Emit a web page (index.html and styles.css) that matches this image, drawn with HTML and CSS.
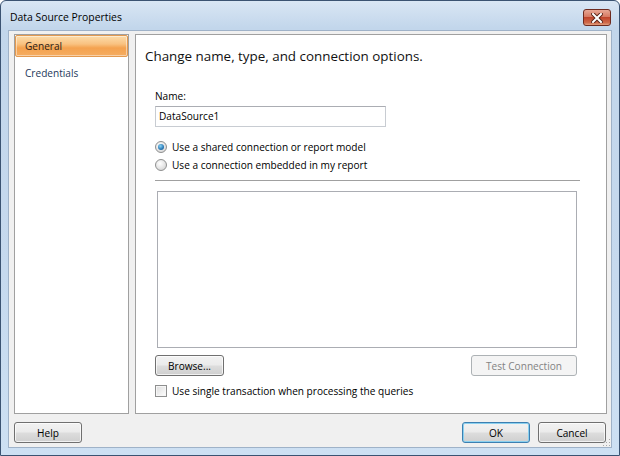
FILE: index.html
```html
<!DOCTYPE html>
<html>
	<head>
		<title>Data Source Properties</title>
		<link rel="stylesheet" href="styles.css">
	</head>
	<body>
		<div class="window">
			<div class="titlebar">
				<span class="title">Data Source Properties</span>
				<div class="close">
					<svg width="12" height="10" viewBox="0 0 12 10">
						<path d="M2 1 L10 9 M10 1 L2 9" stroke="#5a2418" stroke-width="4" stroke-linecap="square"/>
						<path d="M2 1 L10 9 M10 1 L2 9" stroke="#fff" stroke-width="2" stroke-linecap="square"/>
					</svg>
				</div>
			</div>
			<div class="client">
				<div class="main">
					<ul class="nav">
						<li class="active">General</li>
						<li>Credentials</li>
					</ul>
					<div class="page">
						<h1>Change name, type, and connection options.</h1>
						<div class="form">
							<div class="label">Name:</div>
							<div class="textbox">DataSource1</div>
							<div class="option first"><span class="radio on"></span>Use a shared connection or report model</div>
							<div class="option"><span class="radio"></span>Use a connection embedded in my report</div>
							<div class="rule"></div>
							<div class="area"></div>
							<div class="row">
								<button class="btn browse">Browse...</button>
								<button class="btn test" disabled>Test Connection</button>
							</div>
							<div class="option check-row"><span class="check"></span>Use single transaction when processing the queries</div>
						</div>
					</div>
				</div>
				<div class="footer">
					<button class="btn">Help</button>
					<div class="spacer"></div>
					<button class="btn default">OK</button>
					<button class="btn">Cancel</button>
				</div>
				<div class="grip"></div>
			</div>
		</div>
	</body>
</html>
```

FILE: styles.css
```css
html, body {margin: 0; padding: 0;}
body {font-family: "Open Sans", "Liberation Sans", sans-serif; font-size: 10.1px; color: #000;}

.window {
	width: 620px; height: 456px; box-sizing: border-box;
	border: 1px solid #3b5372; border-radius: 6px 6px 0 0;
	padding: 0 7px 7px;
	background: linear-gradient(#d9e6f4, #c2d6eb 6%, #c6d9ee 60%, #cde0f3);
	display: flex; flex-direction: column;
}
.titlebar {height: 29px; display: flex; align-items: flex-start; flex-shrink: 0;}
.title {margin: 9px 0 0 2px; font-size: 10.4px; color: #000;}
.close {
	margin: 8px 1px 0 auto; width: 26px; height: 15px;
	border: 1px solid #6e2b20; border-radius: 3px;
	background: linear-gradient(#e8a795, #d77a63 45%, #c0452d 50%, #cf6a4a 85%, #e2a07f);
	display: flex; align-items: center; justify-content: center;
}
.close svg {display: block;}

.client {
	flex: 1; position: relative;
	border: 1px solid #9fb2c8; background: #f0f0f0;
	padding: 3px 4px 0 5px;
	display: flex; flex-direction: column;
}
.main {display: flex; gap: 6px; height: 380px;}
.nav {
	width: 113px; margin: 0; padding: 0; list-style: none;
	background: #fff; border: 1px solid #a0a0a0;
}
.nav li {height: 22px; line-height: 22px; padding-left: 10px; color: #1e395b; margin-bottom: 5px;}
.nav li.active {
	border: 1px solid #e39a50; border-radius: 2px; line-height: 20px; height: 20px; padding-left: 9px;
	background: linear-gradient(#fcdcaa, #f9c281 40%, #f4a24f 60%, #f5ad62);
	box-shadow: inset 0 0 0 1px rgba(255,255,255,0.45);
	color: #2a2016;
}

.page {flex: 1; background: #fff; border: 1px solid #a0a0a0; padding: 11px 0 0 9px;}
h1 {margin: 0; font-size: 13.4px; font-weight: normal; line-height: 20px; color: #111;}
.form {margin: 23px 0 0 10px; width: 425px;}
.label {line-height: 14px;}
.textbox {
	margin-top: 3px; width: 226px; height: 19px; line-height: 19px; padding-left: 3px;
	border: 1px solid #c8ccd2; border-top-color: #abadb3;
}
.option {display: flex; align-items: center; height: 18px; gap: 5px;}
.option.first {margin-top: 11px;}
.radio {
	width: 10px; height: 10px; border-radius: 50%; box-sizing: content-box;
	border: 1px solid #8e8f8f;
	background: radial-gradient(circle at 40% 35%, #fff, #dcdcdc 70%, #cacaca);
	display: flex; align-items: center; justify-content: center;
}
.radio.on::after {
	content: ""; width: 6px; height: 6px; border-radius: 50%;
	background: radial-gradient(circle at 40% 35%, #8ad4f5, #2a78b5 60%, #1b4f7e);
}
.rule {margin: 6px 0 0; border-top: 1px solid #a0a0a0; height: 0;}
.area {margin: 10px 0 0 2px; width: 418px; height: 155px; border: 1px solid #abadb3;}
.row {display: flex; justify-content: space-between; margin-top: 7px; width: 422px;}
.check-row {margin-top: 6px; height: 18px;}
.check {
	width: 10px; height: 10px; border: 1px solid #8e8f8f;
	background: linear-gradient(135deg, #dcdcdc, #f4f4f4 70%, #fff);
	box-shadow: inset 0 0 0 1px #f6f6f6;
}

.btn {
	font-family: inherit; font-size: 10.1px; color: #000;
	height: 21px; padding: 0; border-radius: 3px;
	border: 1px solid #707070;
	background: linear-gradient(#f2f2f2, #ebebeb 48%, #dddddd 52%, #cfcfcf);
	box-shadow: inset 0 0 0 1px rgba(255,255,255,0.7);
}
.browse {width: 69px;}
.test {width: 106px; color: #838383; border-color: #adb2b5; background: #f4f4f4; box-shadow: none;}
.footer {display: flex; gap: 8px; padding: 8px 1px 0 0;}
.footer .btn {width: 68px;}
.spacer {flex: 1;}
.btn.default {
	border-color: #3c7fb1;
	box-shadow: inset 0 0 0 1px #8ad0ef;
}
.grip {
	position: absolute; right: 1px; bottom: 1px; width: 8px; height: 8px;
	background-image: radial-gradient(circle, #a8a8a8 0.8px, transparent 1px);
	background-size: 3px 3px;
	clip-path: polygon(100% 0, 100% 100%, 0 100%);
}
```
